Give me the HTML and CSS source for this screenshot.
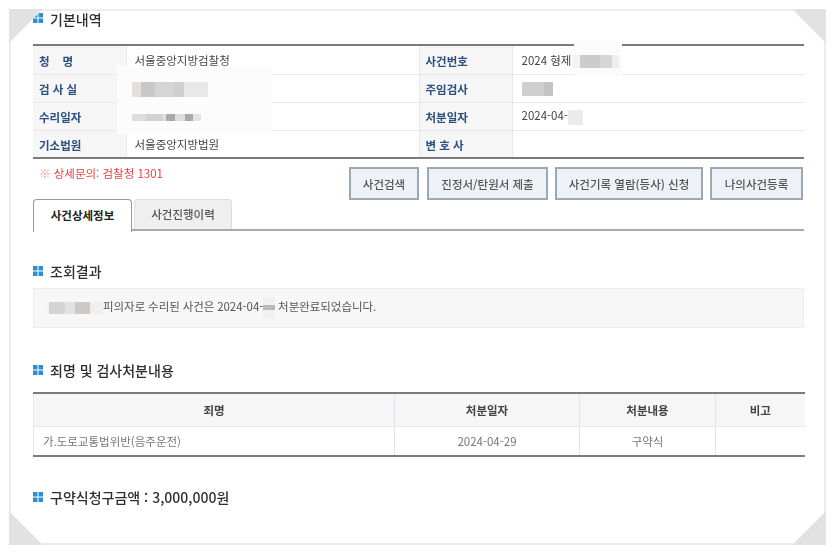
FILE: index.html
```html
<!DOCTYPE html>
<html lang="ko">
<head>
<meta charset="utf-8">
<title>사건상세정보</title>
<link rel="stylesheet" href="styles.css">
</head>
<body>
<div class="frame">
  <div class="content">
    <h2 class="heading h-basic"><svg class="ico" viewBox="0 0 10 10"><path d="M0 0h4.5v4.5H0zM5.5 0H10v4.5H5.5zM0 5.5h4.5V10H0zM5.5 5.5H10V10H5.5z"/></svg>기본내역</h2>
    <table class="info">
      <colgroup><col class="c1"><col class="c2"><col class="c3"><col class="c4"></colgroup>
      <tr class="r1"><th>청&nbsp;&nbsp;&nbsp;&nbsp;명</th><td>서울중앙지방검찰청</td><th>사건번호</th><td>2024 형제<span class="mos mos-no"></span></td></tr>
      <tr class="r2"><th>검 사 실</th><td><span class="mos mos-room"></span></td><th>주임검사</th><td><span class="mos mos-name"></span></td></tr>
      <tr class="r3"><th>수리일자</th><td><span class="mos mos-date"></span></td><th>처분일자</th><td>2024-04-<span class="mos mos-day"></span></td></tr>
      <tr class="r4"><th>기소법원</th><td>서울중앙지방법원</td><th>변 호 사</th><td></td></tr>
    </table>
    <div class="actions">
      <p class="notice"><span class="mark">※</span> 상세문의: 검찰청 1301</p>
      <div class="btns">
        <button class="btn b1">사건검색</button>
        <button class="btn b2">진정서/탄원서 제출</button>
        <button class="btn b3">사건기록 열람(등사) 신청</button>
        <button class="btn b4">나의사건등록</button>
      </div>
    </div>
    <div class="tabs">
      <div class="tab active">사건상세정보</div>
      <div class="tab">사건진행이력</div>
    </div>
    <h2 class="heading h-result"><svg class="ico" viewBox="0 0 10 10"><path d="M0 0h4.5v4.5H0zM5.5 0H10v4.5H5.5zM0 5.5h4.5V10H0zM5.5 5.5H10V10H5.5z"/></svg>조회결과</h2>
    <div class="result"><p class="result-text"><span class="mos mos-person"></span>피의자로 수리된 사건은 2024-04-<span class="mos mos-day2"></span> 처분완료되었습니다.</p></div>
    <h2 class="heading h-crime"><svg class="ico" viewBox="0 0 10 10"><path d="M0 0h4.5v4.5H0zM5.5 0H10v4.5H5.5zM0 5.5h4.5V10H0zM5.5 5.5H10V10H5.5z"/></svg>죄명 및 검사처분내용</h2>
    <table class="disp">
      <colgroup><col class="d1"><col class="d2"><col class="d3"><col class="d4"></colgroup>
      <tr class="hd"><th>죄명</th><th>처분일자</th><th>처분내용</th><th>비고</th></tr>
      <tr class="bd"><td class="left">가.도로교통법위반(음주운전)</td><td>2024-04-29</td><td>구약식</td><td></td></tr>
    </table>
    <h2 class="heading h-amount"><svg class="ico" viewBox="0 0 10 10"><path d="M0 0h4.5v4.5H0zM5.5 0H10v4.5H5.5zM0 5.5h4.5V10H0zM5.5 5.5H10V10H5.5z"/></svg>구약식청구금액 : 3,000,000원</h2>
    <div class="patch"></div>
    <div class="patch-no"></div>
  </div>
  <div class="corner tl"></div>
  <div class="corner tr"></div>
  <div class="corner bl"></div>
  <div class="corner br"></div>
</div>
</body>
</html>
```

FILE: styles.css
```css
* { box-sizing: border-box; }
html, body { margin: 0; padding: 0; background: #fff; }
body { width: 835px; height: 553px; overflow: hidden; padding: 9px 9px 0; font-family: "Noto Sans CJK KR", "Noto Sans", sans-serif; }

.frame { position: relative; width: 817px; height: 536px; border: 2px solid #ececec; background: #fff; }
.content { width: 771px; margin-left: 22px; filter: blur(0.45px); }

.heading { display: flex; align-items: center; margin: 0; font-size: 14px; font-weight: 500; line-height: 20px; height: 20px; color: #2e2e2e; }
.ico { width: 10px; height: 10px; margin-right: 7px; fill: #2f8fd0; flex: none; }
.h-basic { margin-top: -2px; }
.h-basic .ico { margin-top: -2px; }
.h-result { margin-top: 30px; }
.h-crime { margin-top: 32px; }
.h-amount { margin-top: 30px; }

table { border-collapse: collapse; table-layout: fixed; width: 771px; font-size: 11.5px; }
.info { margin-top: 15px; border-top: 2px solid #7b7b7b; border-bottom: 2px solid #7b7b7b; }
.c1 { width: 93px; } .c2 { width: 293px; } .c3 { width: 93px; } .c4 { width: 292px; }
.info tr { border-bottom: 1px solid #e6e8ec; }
.info tr:last-child { border-bottom: 0; }
.r1 { height: 29px; } .r2 { height: 28px; } .r3 { height: 28px; } .r4 { height: 28px; }
.info th { padding: 2px 0 0 6px; text-align: left; background: #f6f6f6; color: #2c5080; font-weight: 700; font-size: 11.5px; border-right: 1px solid #e6e8ec; line-height: 16px; }
.info td { padding: 0 0 0 8px; color: #444; line-height: 16px; border-right: 1px solid #e6e8ec; }
.info td:last-child { border-right: 0; padding-left: 9px; }

.actions { display: flex; justify-content: space-between; align-items: flex-start; padding-top: 8px; height: 40px; }
.notice { margin: -2px 0 0 6px; font-size: 11.5px; line-height: 16px; color: #f03c3c; }
.mark { color: #f59a8e; }
.btns { display: flex; gap: 7px; margin-right: 1px; }
.btn { height: 33px; padding: 0; border: 2px solid #9aa9b8; background: #eef2f6; color: #555; font: 500 11.5px "Noto Sans CJK KR", sans-serif; }
.b1 { width: 70px; } .b2 { width: 121px; margin-left: 1px; } .b3 { width: 148px; } .b4 { width: 93px; }

.tabs { display: flex; gap: 2px; height: 32px; border-bottom: 2px solid #aaa; }
.tab { width: 98px; height: 30px; background: #efefef; border: 1px solid #ddd; border-bottom: 0; border-radius: 4px 4px 0 0; text-align: center; font-size: 11.5px; line-height: 29px; color: #555; font-weight: 500; }
.tab.active { width: 99px; height: 33px; background: #fff; border: 1px solid #999; border-bottom: 0; color: #222; font-weight: 700; position: relative; z-index: 1; line-height: 30px; }

.result { height: 40px; margin-top: 7px; padding-left: 10px; display: flex; align-items: center; background: #f7f7f7; border: 1px solid #ececec; font-size: 11.5px; color: #555; }
.result-text { margin: 0; white-space: nowrap; letter-spacing: -0.03px; word-spacing: -0.3px; }

.disp { margin-top: 12px; border-top: 2px solid #7b7b7b; border-bottom: 2px solid #7b7b7b; }
.d1 { width: 361px; } .d2 { width: 185px; } .d3 { width: 136px; } .d4 { width: 89px; }
.hd { height: 33px; } .bd { height: 30px; }
.hd th { background: #f6f6f6; color: #444; font-weight: 700; font-size: 11.5px; border-right: 1px solid #dfe3ea; border-bottom: 1px solid #e6e8ec; }
.bd td { text-align: center; color: #777; border-right: 1px solid #dfe3ea; }
.hd th:first-child, .bd td:first-child { border-left: 1px solid #e6e8ec; }
.hd th:last-child, .bd td:last-child { border-right: 0; }
.bd .left { text-align: left; padding-left: 9px; }

.mos { display: inline-block; vertical-align: middle; position: relative; z-index: 2; }
.mos-no { width: 47px; height: 13px; margin-left: 1px; background: linear-gradient(90deg, #f4f4f4 0 16%, #ccc 16% 60%, #d6d6d6 60% 85%, #efefef 85%); }
.mos-room { width: 76px; height: 15px; margin-left: -3px; background: linear-gradient(90deg, #e4e0dd 0 12%, #c8c8c8 12% 30%, #d5d5d5 30% 55%, #cfcfd2 55% 68%, #e8e8e8 68% 100%); }
.mos-date { width: 69px; height: 7px; margin-left: -3px; background: linear-gradient(90deg, #ddd 0 20%, #cfd3d8 20% 45%, #e0e0e0 45% 50%, #aaa 50% 62%, #ddd 62% 77%, #aaa 77% 88%, #e4e4e4 88%); }
.mos-name { width: 31px; height: 14px; background: linear-gradient(90deg, #d0cfd0 0 70%, #c4c4c4 70%); }
.mos-day { width: 15px; height: 15px; background: #ebebeb; }
.mos-person { width: 59px; height: 12px; background: linear-gradient(90deg, #f5f4f3 0 8%, #d6d4d2 8% 35%, #e2e2e2 35% 52%, #cfc9c5 52% 78%, #f1efee 78%); }
.mos-day2 { width: 12px; height: 22px; background: linear-gradient(#f0f0f0 0 35%, #b9b9b9 35% 60%, #f0f0f0 60%); }

.patch { position: absolute; left: 84px; top: 57px; width: 155px; height: 68px; background: #fcfcfc; z-index: 1; }
.patch-no { position: absolute; left: 541px; top: 32px; width: 48px; height: 34px; background: #fbfbfb; z-index: 1; }

.corner { position: absolute; width: 34px; height: 34px; background: #e2e2e2; }
.tl { left: -2px; top: -2px; clip-path: polygon(0 0, 100% 0, 0 100%); }
.tr { right: -2px; top: -2px; clip-path: polygon(0 0, 100% 0, 100% 100%); }
.bl { left: -2px; bottom: -2px; clip-path: polygon(0 0, 100% 100%, 0 100%); }
.br { right: -2px; bottom: -2px; clip-path: polygon(100% 0, 100% 100%, 0 100%); }
```
